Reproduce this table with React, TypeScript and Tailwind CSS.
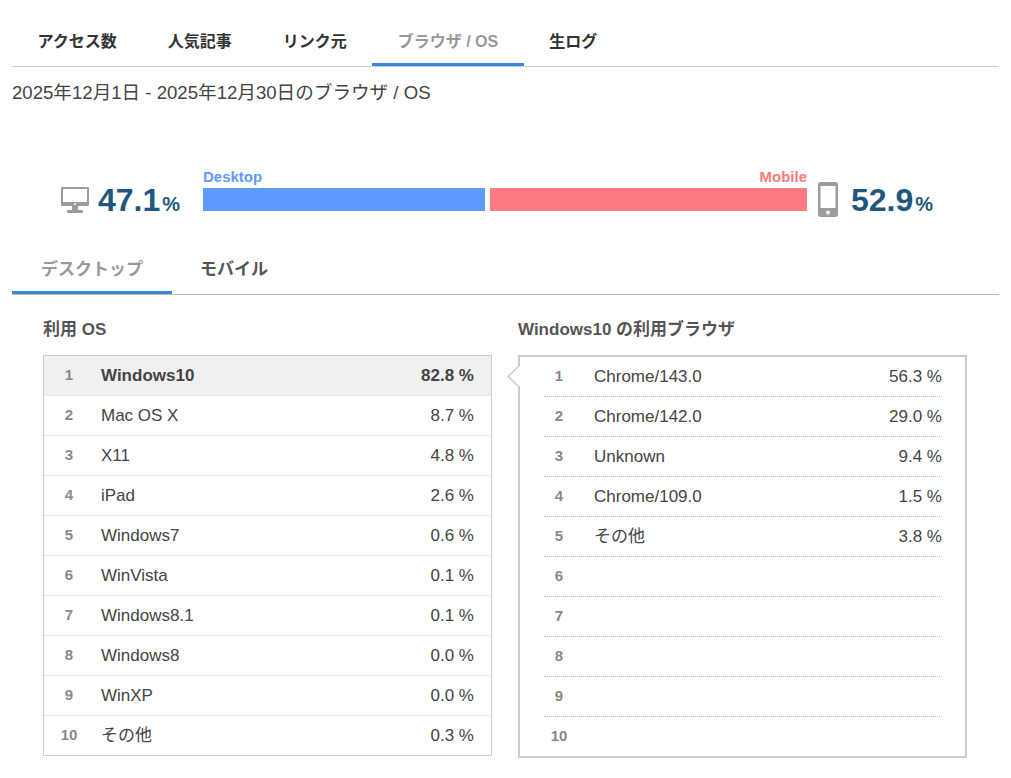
import React from "react";

const navTabs = ["アクセス数", "人気記事", "リンク元", "ブラウザ / OS", "生ログ"];

const osRows = [
  { name: "Windows10", pct: "82.8 %" },
  { name: "Mac OS X", pct: "8.7 %" },
  { name: "X11", pct: "4.8 %" },
  { name: "iPad", pct: "2.6 %" },
  { name: "Windows7", pct: "0.6 %" },
  { name: "WinVista", pct: "0.1 %" },
  { name: "Windows8.1", pct: "0.1 %" },
  { name: "Windows8", pct: "0.0 %" },
  { name: "WinXP", pct: "0.0 %" },
  { name: "その他", pct: "0.3 %" },
];

const browserRows = [
  { name: "Chrome/143.0", pct: "56.3 %" },
  { name: "Chrome/142.0", pct: "29.0 %" },
  { name: "Unknown", pct: "9.4 %" },
  { name: "Chrome/109.0", pct: "1.5 %" },
  { name: "その他", pct: "3.8 %" },
  { name: "", pct: "" },
  { name: "", pct: "" },
  { name: "", pct: "" },
  { name: "", pct: "" },
  { name: "", pct: "" },
];

function MonitorIcon() {
  return (
    <svg width="28" height="26" viewBox="0 0 28 26">
      <rect x="0" y="0" width="28" height="19" rx="1" fill="#9c9c9c" />
      <rect x="2" y="2" width="24" height="13" fill="#fff" />
      <circle cx="14" cy="17" r="1" fill="#fff" />
      <rect x="11" y="19" width="6" height="4" fill="#9c9c9c" />
      <rect x="6" y="23" width="16" height="3" rx="1" fill="#9c9c9c" />
    </svg>
  );
}

function PhoneIcon() {
  return (
    <svg width="20" height="35" viewBox="0 0 20 35">
      <rect x="0" y="0" width="20" height="35" rx="3" fill="#9c9c9c" />
      <rect x="2.5" y="4" width="15" height="22" fill="#fff" />
      <circle cx="10" cy="30.5" r="2" fill="#fff" />
    </svg>
  );
}

function Share({ value }: { value: string }) {
  return (
    <div className="flex items-baseline font-bold leading-none text-[#1f587c]">
      <span className="text-[32px]">{value}</span>
      <span className="ml-[2px] text-[20px]">%</span>
    </div>
  );
}

export default function App() {
  return (
    <div className="min-h-screen bg-white px-[12px] pt-[16px] font-['Liberation_Sans','Noto_Sans_CJK_JP',sans-serif] text-[#444]">
      {/* main tabs */}
      <nav className="flex border-b border-[#cccccc]">
        {navTabs.map((t) => {
          const active = t === "ブラウザ / OS";
          return (
            <div
              key={t}
              className={
                active
                  ? "border-b-[3px] border-[#3b88d8] px-[25.5px] pb-[9px] pt-[14px] text-[16px] font-bold leading-6 text-[#999]"
                  : "border-b-[3px] border-transparent px-[25.5px] pb-[9px] pt-[14px] text-[16px] font-bold leading-6 text-[#333]"
              }
            >
              {t}
            </div>
          );
        })}
      </nav>

      <div className="mt-[12px] text-[18.6px] leading-[27px] text-[#444]">
        2025年12月1日 - 2025年12月30日のブラウザ / OS
      </div>

      {/* desktop / mobile summary */}
      <div className="mt-[63px] flex items-end pl-[49px]">
        <div className="flex h-[23px] w-[142px] items-center">
          <div className="mr-[9px]">
            <MonitorIcon />
          </div>
          <Share value="47.1" />
        </div>
        <div className="flex w-[604px] flex-col">
          <div className="mb-[3px] flex justify-between text-[15px] font-bold leading-4">
            <span className="text-[#5f9bff]">Desktop</span>
            <span className="text-[#ff7a80]">Mobile</span>
          </div>
          <div className="flex h-[23px] gap-[5px]">
            <div className="bg-[#5f9bff]" style={{ width: "46.7%" }} />
            <div className="flex-1 bg-[#ff7b81]" />
          </div>
        </div>
        <div className="ml-[11px] flex h-[23px] items-center">
          <div className="mr-[13px]">
            <PhoneIcon />
          </div>
          <Share value="52.9" />
        </div>
      </div>

      {/* sub tabs */}
      <div className="mt-[33px] flex border-b border-[#bbbbbb]">
        <div className="border-b-[3px] border-[#3b88d8] px-[29px] pb-[9px] pt-[14px] text-[17px] font-bold leading-6 text-[#999]">
          デスクトップ
        </div>
        <div className="border-b-[3px] border-transparent px-[28px] pb-[9px] pt-[14px] text-[17px] font-bold leading-6 text-[#555]">
          モバイル
        </div>
      </div>

      <div className="mt-[23px] flex gap-[26px] px-[31px]">
        {/* OS list */}
        <div className="w-[449px]">
          <h2 className="mb-[13px] text-[17px] font-bold leading-6 text-[#555]">利用 OS</h2>
          <div className="border border-[#cccccc]">
            {osRows.map((r, i) => (
              <div
                key={r.name}
                className={
                  i === 0
                    ? "flex h-[39px] items-center bg-[#f0f0f0] pr-[17px] font-bold"
                    : "flex h-[40px] items-center border-t border-[#e6e6e6] pr-[17px]"
                }
              >
                <span className="w-[50px] text-center text-[15px] font-bold text-[#888]">{i + 1}</span>
                <span className="ml-[7px] flex-1 text-[17px] text-[#444]">{r.name}</span>
                <span className="text-[17px] text-[#444]">{r.pct}</span>
              </div>
            ))}
          </div>
        </div>

        {/* browsers for selected OS */}
        <div className="w-[449px]">
          <h2 className="mb-[13px] text-[17px] font-bold leading-6 text-[#555]">Windows10 の利用ブラウザ</h2>
          <div className="relative border-2 border-[#cccccc] pl-[24px] pr-[23px]">
            <svg className="absolute left-[-13px] top-[9px]" width="16" height="21" viewBox="0 0 16 21">
              <rect x="11" y="1" width="5" height="19" fill="#fff" />
              <polyline points="12,0 1,10.5 12,21" fill="#fff" stroke="#cccccc" strokeWidth="1.5" />
            </svg>
            {browserRows.map((r, i) => (
              <div
                key={i}
                className={
                  i === browserRows.length - 1
                    ? "flex h-[39px] items-center"
                    : "flex h-[40px] items-center border-b border-dotted border-[#bbbbbb]"
                }
              >
                <span className="w-[30px] text-center text-[15px] font-bold text-[#888]">{i + 1}</span>
                <span className="ml-[20px] flex-1 text-[17px] text-[#444]">{r.name}</span>
                <span className="text-[17px] text-[#444]">{r.pct}</span>
              </div>
            ))}
          </div>
        </div>
      </div>
    </div>
  );
}
